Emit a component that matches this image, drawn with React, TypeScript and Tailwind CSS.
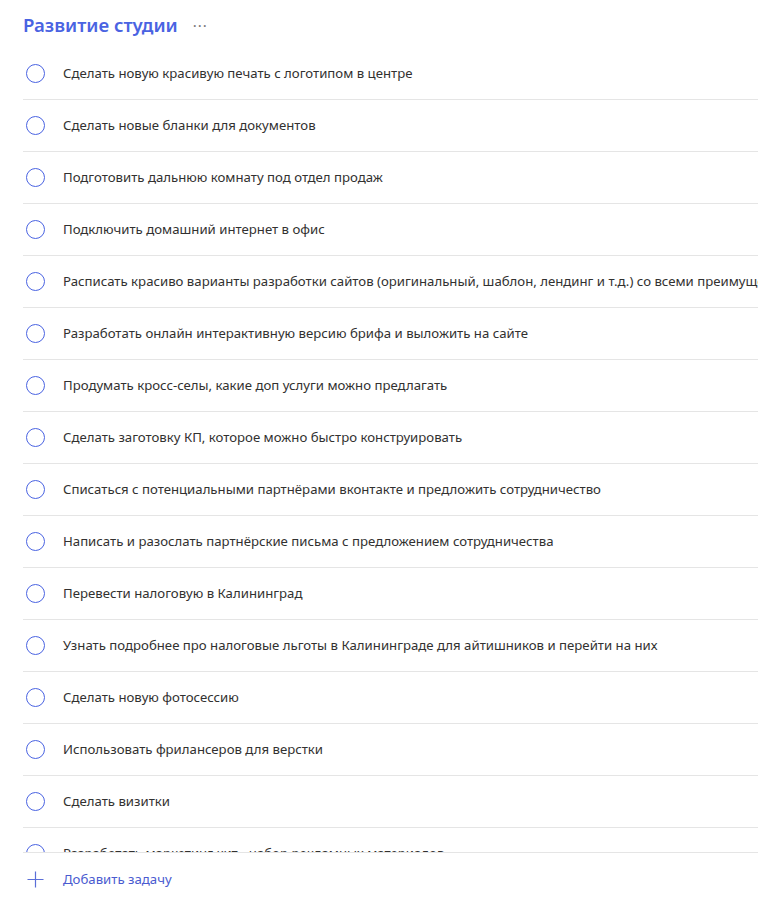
const tasks = [
  "Сделать новую красивую печать с логотипом в центре",
  "Сделать новые бланки для документов",
  "Подготовить дальнюю комнату под отдел продаж",
  "Подключить домашний интернет в офис",
  "Расписать красиво варианты разработки сайтов (оригинальный, шаблон, лендинг и т.д.) со всеми преимуществами и недостатками",
  "Разработать онлайн интерактивную версию брифа и выложить на сайте",
  "Продумать кросс-селы, какие доп услуги можно предлагать",
  "Сделать заготовку КП, которое можно быстро конструировать",
  "Списаться с потенциальными партнёрами вконтакте и предложить сотрудничество",
  "Написать и разослать партнёрские письма с предложением сотрудничества",
  "Перевести налоговую в Калининград",
  "Узнать подробнее про налоговые льготы в Калининграде для айтишников и перейти на них",
  "Сделать новую фотосессию",
  "Использовать фрилансеров для верстки",
  "Сделать визитки",
  "Разработать маркетинг кит - набор рекламных материалов",
];

const TaskRow: React.FC<{ title: string }> = ({ title }) => (
  <div className="ml-[23px] flex h-[52px] shrink-0 items-center overflow-hidden border-b border-[#e5e5e5]">
    <div className="flex w-[40px] shrink-0 justify-start pl-[3px]">
      <span className="block h-[19px] w-[19px] rounded-full border-[1.5px] border-[#4a63e2]" />
    </div>
    <span className="whitespace-nowrap text-[13.2px] text-[#323130]">{title}</span>
  </div>
);

export default function App() {
  return (
    <div
      className="flex h-[903px] w-[758px] flex-col overflow-hidden bg-white"
      style={{ fontFamily: '"Noto Sans", "Open Sans", sans-serif' }}
    >
      <header className="flex h-[48px] shrink-0 items-center pl-[23px] pt-[3px]">
        <h1 className="text-[18.6px] font-semibold leading-none text-[#4a63e2]">Развитие студии</h1>
        <span className="ml-[15px] text-[15px] leading-none tracking-[1px] text-[#777]">···</span>
      </header>
      <div className="flex h-[804px] shrink-0 flex-col overflow-hidden">
        {tasks.map((t, i) => (
          <TaskRow key={i} title={t} />
        ))}
      </div>
      <div className="ml-[23px] flex h-[51px] shrink-0 items-center border-t border-[#e5e5e5] pt-[3px]">
        <div className="w-[40px] shrink-0 pl-[4px]">
          <svg width="17" height="17" viewBox="0 0 17 17" fill="none">
            <path d="M8.5 0.5v16M0.5 8.5h16" stroke="#5b6fd8" strokeWidth="1.2" />
          </svg>
        </div>
        <span className="text-[13.2px] text-[#4a5bd0]">Добавить задачу</span>
      </div>
    </div>
  );
}
